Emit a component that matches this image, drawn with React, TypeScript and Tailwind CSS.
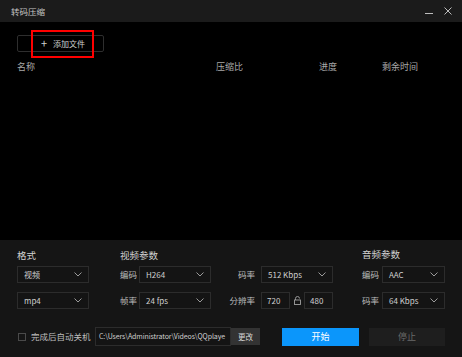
import React from 'react';

const font = { fontFamily: '"Noto Sans CJK SC", "Noto Sans", sans-serif' };

function Chevron() {
  return (
    <svg width="8" height="5" viewBox="0 0 8 5" className="shrink-0">
      <path d="M0.5 0.5 L4 4 L7.5 0.5" fill="none" stroke="#9a9a9a" strokeWidth="1" />
    </svg>
  );
}

function Select({ value, w }: { value: string; w: string }) {
  return (
    <div className={`${w} h-[17px] border border-[#2c2c2c] bg-[#141414] flex items-center justify-between pl-[6px] pr-[6px]`}>
      <span className="text-[8px] text-[#cfcfcf] leading-none">{value}</span>
      <Chevron />
    </div>
  );
}

function Field({ value }: { value: string }) {
  return (
    <div className="w-[29px] h-[17px] border border-[#2c2c2c] bg-[#141414] flex items-center pl-[5px]">
      <span className="text-[8px] text-[#cfcfcf] leading-none">{value}</span>
    </div>
  );
}

export default function App() {
  return (
    <div className="w-[462px] h-[357px] flex flex-col bg-black overflow-hidden" style={font}>
      {/* Title bar */}
      <div className="h-[22px] bg-[#1b1b1b] flex items-center justify-between pl-[11px] pr-[10px]">
        <span className="text-[8.5px] text-[#c4c4c4] leading-none">转码压缩</span>
        <div className="flex items-center gap-[11px]">
          <svg width="8" height="8" viewBox="0 0 8 8">
            <path d="M0 6.5 H8" stroke="#bdbdbd" strokeWidth="1" />
          </svg>
          <svg width="8" height="8" viewBox="0 0 8 8">
            <path d="M0.5 0.5 L7.5 7.5 M7.5 0.5 L0.5 7.5" stroke="#bdbdbd" strokeWidth="1" />
          </svg>
        </div>
      </div>

      {/* File list */}
      <div className="flex-1 px-[17px] pt-[13px]">
        <div className="relative w-[87px] h-[17px] border border-[#2e2e2e] rounded-[2px] flex items-center pl-[23px] gap-[6px]">
          <span className="text-[11px] text-[#d0d0d0] leading-none">+</span>
          <span className="text-[8px] text-[#d0d0d0] leading-none">添加文件</span>
          <div className="absolute left-[13px] top-[-6px] w-[63px] h-[28px] border-2 border-[#ff0000]" />
        </div>
        <div className="flex items-center mt-[10px] text-[9px] text-[#a8a8a8] leading-none">
          <span className="w-[199px]">名称</span>
          <span className="w-[103px]">压缩比</span>
          <span className="w-[63px]">进度</span>
          <span>剩余时间</span>
        </div>
      </div>

      {/* Settings panel */}
      <div className="h-[117px] bg-[#151515] pl-[17px] pt-[11px]">
        <div className="flex items-center h-[10px] text-[9.5px] text-[#d2d2d2] leading-none">
          <span className="w-[103px]">格式</span>
          <span className="w-[242px]">视频参数</span>
          <span className="mt-[-2px]">音频参数</span>
        </div>

        <div className="flex items-center mt-[5px] text-[8.5px] text-[#bdbdbd] leading-none">
          <Select value="视频" w="w-[72px]" />
          <span className="w-[19px] ml-[31px]">编码</span>
          <Select value="H264" w="w-[72px]" />
          <span className="w-[50px] text-right pr-[6px]">码率</span>
          <Select value="512 Kbps" w="w-[72px]" />
          <span className="w-[20px] ml-[29px]">编码</span>
          <Select value="AAC" w="w-[63px]" />
        </div>

        <div className="flex items-center mt-[9px] text-[8.5px] text-[#bdbdbd] leading-none">
          <Select value="mp4" w="w-[72px]" />
          <span className="w-[19px] ml-[31px]">帧率</span>
          <Select value="24 fps" w="w-[72px]" />
          <span className="w-[50px] text-right pr-[6px]">分辨率</span>
          <Field value="720" />
          <div className="w-[14px] flex justify-center">
            <svg width="7" height="9" viewBox="0 0 7 9">
              <path d="M1.5 4 V2.5 A2 2 0 0 1 5.5 2.5" fill="none" stroke="#a0a0a0" strokeWidth="0.9" />
              <rect x="0.5" y="4" width="6" height="4.5" fill="none" stroke="#a0a0a0" strokeWidth="0.9" />
            </svg>
          </div>
          <Field value="480" />
          <span className="w-[20px] ml-[29px]">码率</span>
          <Select value="64 Kbps" w="w-[63px]" />
        </div>

        <div className="flex items-center mt-[18px]">
          <div className="w-[8px] h-[8px] ml-[1px] border border-[#4a4a4a]" />
          <span className="ml-[5px] w-[64px] text-[8.5px] text-[#bdbdbd] leading-none">完成后自动关机</span>
          <div className="w-[136px] h-[19px] border border-[#2c2c2c] bg-[#141414] flex items-center pl-[3px] overflow-hidden">
            <span className="text-[7px] text-[#cfcfcf] leading-none whitespace-nowrap tracking-[-0.1px]">C:\Users\Administrator\Videos\QQplaye</span>
          </div>
          <div className="w-[29px] h-[17px] bg-[#333333] flex items-center justify-center">
            <span className="text-[7.5px] text-[#d8d8d8] leading-none">更改</span>
          </div>
          <div className="ml-[22px] w-[77px] h-[18px] bg-[#0b96fb] flex items-center justify-center">
            <span className="text-[9px] text-white leading-none">开始</span>
          </div>
          <div className="ml-[10px] w-[76px] h-[18px] bg-[#1e1e1e] flex items-center justify-center">
            <span className="text-[9px] text-[#6a6a6a] leading-none">停止</span>
          </div>
        </div>
      </div>
    </div>
  );
}
